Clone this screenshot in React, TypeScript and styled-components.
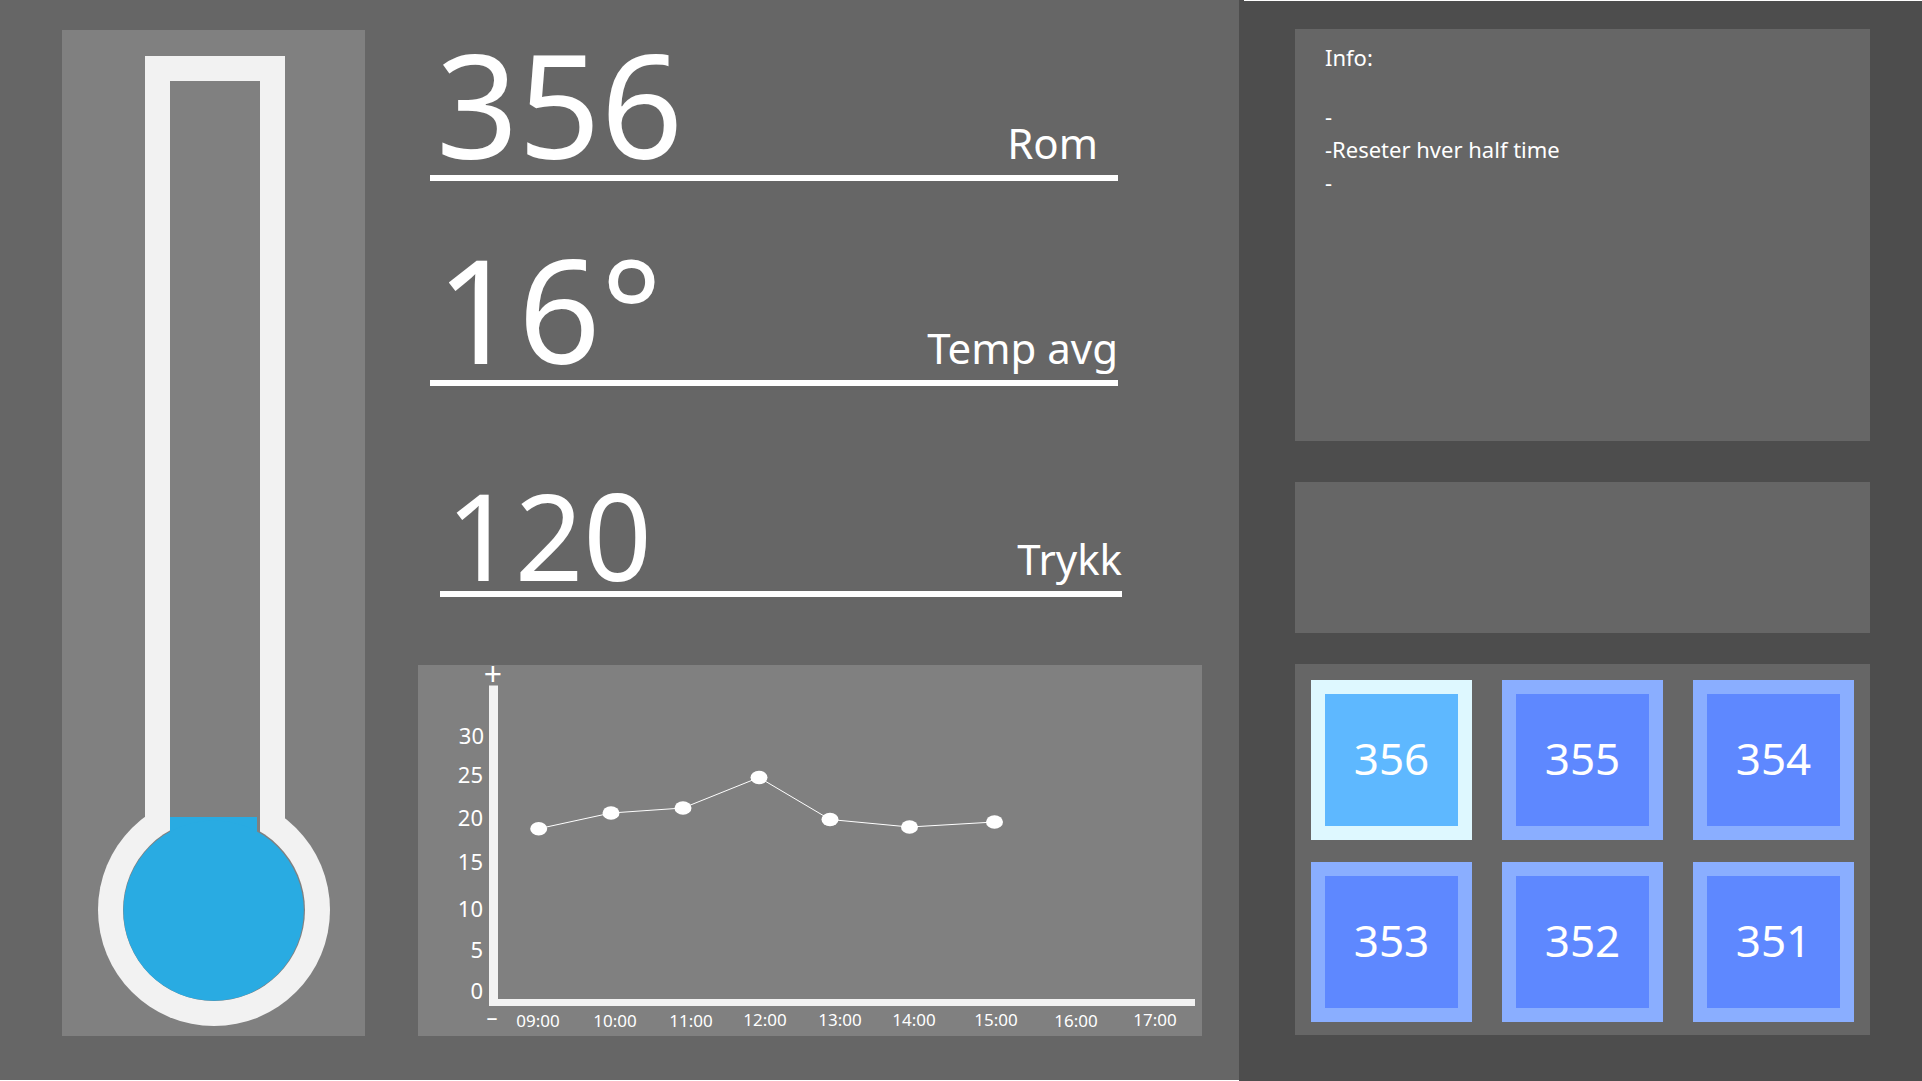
import React, { useState } from "react";
import styled, { createGlobalStyle } from "styled-components";

const GlobalStyle = createGlobalStyle`
  *, *::before, *::after { box-sizing: border-box; }
  body {
    margin: 0;
    background: #666666;
    color: #ffffff;
    font-family: "Noto Sans", "Open Sans", sans-serif;
  }
  h1, h2, p, ul, dl, dd { margin: 0; padding: 0; }
`;

const Page = styled.div`
  display: grid;
  grid-template-columns: minmax(0, 1239fr) minmax(0, 683fr);
  min-height: 100vh;
`;

const Main = styled.main`
  display: grid;
  grid-template-columns: 303px minmax(0, 1fr);
  column-gap: 53px;
  padding: 30px 37px 44px 62px;
  border-bottom: 1px solid #ffffff;
`;

const ThermometerPanel = styled.section`
  background: #808080;
`;

const Drawing = styled.svg`
  display: block;
  width: 100%;
  height: 100%;
  overflow: visible;
`;

const Overview = styled.div`
  display: flex;
  flex-direction: column;
`;

const Metrics = styled.dl`
  display: flex;
  flex-direction: column;
  padding: 1px 84px 68px 12px;
`;

const Metric = styled.div<{ $shifted?: boolean }>`
  display: flex;
  flex-direction: row-reverse;
  justify-content: space-between;
  align-items: flex-end;
  margin: ${(p) => (p.$shifted ? "93px -4px 0 10px" : "0")};
  padding-left: 6px;
  border-bottom: 6px solid #ffffff;

  & + &:nth-child(2) {
    margin-top: 55px;
  }
`;

const MetricLabel = styled.dt<{ $inset?: boolean }>`
  padding: 0 ${(p) => (p.$inset ? 20 : 0)}px 11px 0;
  font-size: 42px;
  line-height: 42px;
`;

const MetricValue = styled.dd<{ $small?: boolean }>`
  font-size: ${(p) => (p.$small ? 120 : 144)}px;
  line-height: ${(p) => (p.$small ? 112 : 144)}px;
`;

const ChartPanel = styled.section`
  flex: 1;
  min-height: 371px;
  background: #808080;
`;

const AxisText = styled.text<{ $size: number }>`
  fill: #ffffff;
  font-size: ${(p) => p.$size}px;
`;

const Side = styled.aside`
  display: flex;
  flex-direction: column;
  padding: 29px 52px 46px 56px;
  background: linear-gradient(#ffffff, #ffffff) 5px 0 / 100% 1px no-repeat #4d4d4d;
`;

const InfoPanel = styled.section`
  flex: 1;
  min-height: 412px;
  padding: 12px 30px;
  background: #666666;
  font-size: 22px;
  line-height: 33px;
`;

const InfoTitle = styled.h2`
  margin-bottom: 26px;
  font-size: inherit;
  font-weight: 400;
`;

const InfoList = styled.ul`
  list-style: none;
`;

const NoticePanel = styled.section`
  height: 151px;
  margin: 41px 0 31px;
  background: #666666;
`;

const Rooms = styled.nav`
  display: grid;
  grid-template-columns: repeat(3, minmax(0, 1fr));
  gap: 22px 30px;
  padding: 16px 16px 13px;
  background: #666666;
`;

const RoomButton = styled.button<{ $active: boolean }>`
  height: 160px;
  padding: 0 0 4px;
  border: 14px solid ${(p) => (p.$active ? "#def8ff" : "#8aaeff")};
  background: ${(p) => (p.$active ? "#5eb8ff" : "#5e88ff")};
  color: #ffffff;
  font: inherit;
  font-size: 44px;
  line-height: 60px;
  cursor: pointer;
`;

function Thermometer() {
  return (
    <ThermometerPanel aria-label="Temperatur">
      <Drawing viewBox="0 0 303 1006" role="img" aria-label="Termometer">
        <g fill="#f2f2f2">
          <rect x="83" y="26" width="140" height="820" />
          <circle cx="152" cy="880" r="116" />
        </g>
        <g fill="#808080">
          <rect x="108" y="51" width="90" height="800" />
          <circle cx="152" cy="880" r="91" />
        </g>
        <g fill="#29abe2">
          <rect x="108" y="787" width="87" height="40" />
          <circle cx="151.6" cy="880.6" r="90.2" />
        </g>
      </Drawing>
    </ThermometerPanel>
  );
}

const scale = [
  { label: "30", x: 66, y: 70 },
  { label: "25", x: 65, y: 109 },
  { label: "20", x: 65, y: 152 },
  { label: "15", x: 65, y: 196 },
  { label: "10", x: 65, y: 243 },
  { label: "5", x: 65, y: 284 },
  { label: "0", x: 65, y: 325 },
];

const hours = [
  { label: "09:00", x: 120, y: 356 },
  { label: "10:00", x: 197, y: 356 },
  { label: "11:00", x: 273, y: 356 },
  { label: "12:00", x: 347, y: 355 },
  { label: "13:00", x: 422, y: 355 },
  { label: "14:00", x: 496, y: 355 },
  { label: "15:00", x: 578, y: 355 },
  { label: "16:00", x: 658, y: 356 },
  { label: "17:00", x: 737, y: 355 },
];

const readings = [
  [120.7, 163.7],
  [193, 148],
  [265, 143],
  [341, 112.5],
  [412, 154.5],
  [491.5, 162],
  [576.5, 157],
];

function Chart() {
  return (
    <ChartPanel aria-label="Temperatur per time">
      <Drawing viewBox="0 0 784 371" role="img" aria-label="Temperaturgraf">
        <path d="M71 20.5H80V334H777V341H71Z" fill="#f2f2f2" />
        <polyline
          points={readings.map((p) => p.join(",")).join(" ")}
          fill="none"
          stroke="#ffffff"
          strokeWidth="1"
        />
        {readings.map(([x, y]) => (
          <ellipse key={x} cx={x} cy={y} rx="8.5" ry="6.8" fill="#ffffff" />
        ))}
        <AxisText $size={32} x="75" y="21" textAnchor="middle">+</AxisText>
        <AxisText $size={22} x="74" y="360" textAnchor="middle">–</AxisText>
        {scale.map((s) => (
          <AxisText key={s.label} $size={22} x={s.x} y={s.y + 9} textAnchor="end">
            {s.label}
          </AxisText>
        ))}
        {hours.map((h) => (
          <AxisText key={h.label} $size={17} x={h.x} y={h.y + 6} textAnchor="middle">
            {h.label}
          </AxisText>
        ))}
      </Drawing>
    </ChartPanel>
  );
}

const rooms = ["356", "355", "354", "353", "352", "351"];

export default function App() {
  const [room, setRoom] = useState("356");

  return (
    <>
      <GlobalStyle />
      <Page>
        <Main>
          <Thermometer />
          <Overview>
            <Metrics>
              <Metric>
                <MetricLabel $inset>Rom</MetricLabel>
                <MetricValue>{room}</MetricValue>
              </Metric>
              <Metric>
                <MetricLabel>Temp avg</MetricLabel>
                <MetricValue>16°</MetricValue>
              </Metric>
              <Metric $shifted>
                <MetricLabel>Trykk</MetricLabel>
                <MetricValue $small>120</MetricValue>
              </Metric>
            </Metrics>
            <Chart />
          </Overview>
        </Main>
        <Side>
          <InfoPanel>
            <InfoTitle>Info:</InfoTitle>
            <InfoList>
              <li>-</li>
              <li>-Reseter hver half time</li>
              <li>-</li>
            </InfoList>
          </InfoPanel>
          <NoticePanel />
          <Rooms aria-label="Rom">
            {rooms.map((r) => (
              <RoomButton
                key={r}
                type="button"
                $active={r === room}
                aria-pressed={r === room}
                onClick={() => setRoom(r)}
              >
                {r}
              </RoomButton>
            ))}
          </Rooms>
        </Side>
      </Page>
    </>
  );
}
